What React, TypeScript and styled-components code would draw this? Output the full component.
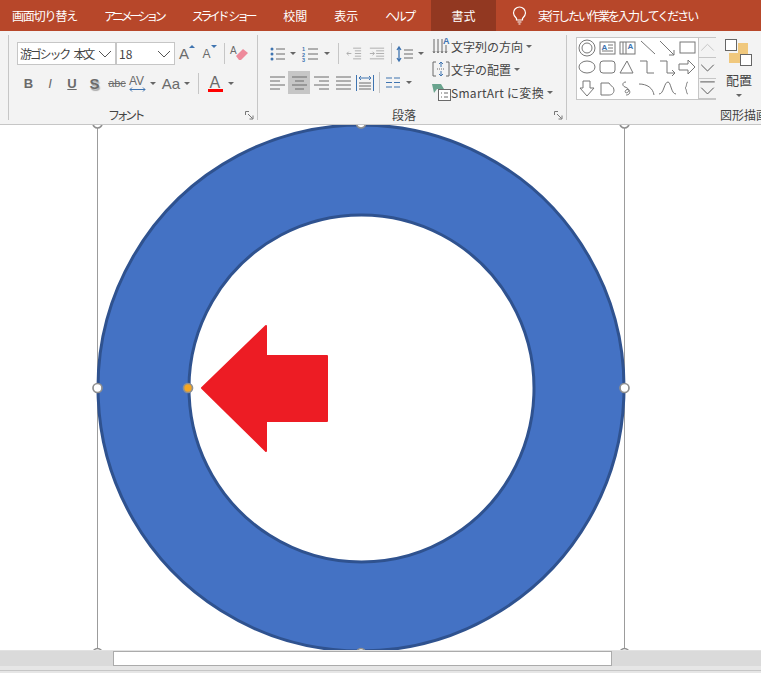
import React from "react";
import styled, { createGlobalStyle } from "styled-components";

const Global = createGlobalStyle`
  html, body { margin: 0; padding: 0; background: #e6e6e6; overflow: hidden; }
  body { font-family: "Noto Sans CJK JP", "Liberation Sans", sans-serif; }
  #root { width: 761px; height: 673px; }
`;

const GRAY = "#6a6a6a";
const BLUE = "#3f74b0";

const Page = styled.div`
  width: 761px; height: 673px; display: flex; flex-direction: column; overflow: hidden; background: #e6e6e6;
`;
const TabBar = styled.div`
  height: 31px; flex: none; display: flex; align-items: stretch; background: #b7472a; padding-left: 12px;
  color: #fff; font-size: 12px; white-space: nowrap;
`;
const Tab = styled.div<{ $track?: number; $gap?: number; $active?: boolean }>`
  display: flex; align-items: center; padding: ${(p) => (p.$active ? "0 20.5px" : "0")};
  margin-right: ${(p) => p.$gap ?? 27}px; letter-spacing: ${(p) => p.$track ?? 0}px; word-spacing: 3px;
  background: ${(p) => (p.$active ? "#923821" : "transparent")};
`;
const TellMe = styled.div`
  display: flex; align-items: center; gap: 11px; letter-spacing: -2px;
`;

const Ribbon = styled.div`
  height: 93px; flex: none; display: flex; background: #f3f3f3; border-bottom: 1px solid #c6c6c6; padding-left: 8px; overflow: hidden; box-sizing: content-box;
`;
const Group = styled.div<{ $w: number; $pad: number }>`
  position: relative; flex: none; width: ${(p) => p.$w}px; height: 85px; margin-top: 4px; display: flex; flex-direction: column;
  border-left: 1px solid #c6c6c6; box-sizing: border-box; padding-left: ${(p) => p.$pad}px;
`;
const GroupBody = styled.div<{ $gap?: number }>`
  flex: 1; display: flex; gap: ${(p) => p.$gap ?? 0}px; min-height: 0;
`;
const Stack = styled.div<{ $top?: number; $gap?: number }>`
  display: flex; flex-direction: column; padding-top: ${(p) => p.$top ?? 0}px; gap: ${(p) => p.$gap ?? 0}px;
`;
const Row = styled.div<{ $h: number }>`
  display: flex; align-items: center; height: ${(p) => p.$h}px; flex: none;
`;
const GroupLabel = styled.div<{ $indent: number; $track?: number }>`
  height: 13px; flex: none; font-size: 12px; color: #444; line-height: 16px; white-space: nowrap; padding-left: ${(p) => p.$indent}px;
  letter-spacing: ${(p) => p.$track ?? 0}px;
`;
const Launcher = styled.svg`
  position: absolute; right: 3px; bottom: 0; width: 9px; height: 9px;
`;
const Combo = styled.div<{ $w: number; $track?: number }>`
  width: ${(p) => p.$w}px; height: 23px; box-sizing: border-box; background: #fff; border: 1px solid #c6c6c6; display: flex; align-items: center;
  justify-content: space-between; padding: 0 3px 0 2px; font-size: 12px; color: #444; white-space: nowrap; letter-spacing: ${(p) => p.$track ?? 0}px;
  word-spacing: 4px; overflow: hidden; flex: none;
`;
const Slot = styled.div<{ $w: number; $on?: boolean; $h?: number }>`
  width: ${(p) => p.$w}px; height: ${(p) => p.$h ?? 23}px; flex: none; display: flex; align-items: center; justify-content: center; color: ${GRAY};
  background: ${(p) => (p.$on ? "#c6c6c6" : "transparent")}; font-family: "Liberation Sans", sans-serif; line-height: 1;
`;
const Glyph = styled.span<{ $size: number; $bold?: boolean; $italic?: boolean; $under?: boolean; $strike?: boolean; $shadow?: boolean }>`
  font-size: ${(p) => p.$size}px; font-weight: ${(p) => (p.$bold ? 700 : 400)}; font-style: ${(p) => (p.$italic ? "italic" : "normal")};
  text-decoration: ${(p) => (p.$under ? "underline" : p.$strike ? "line-through" : "none")}; color: ${GRAY};
  text-shadow: ${(p) => (p.$shadow ? "1px 2px 1px #aaa" : "none")};
`;
const Mark = styled.svg<{ $lift: number }>`
  width: 6px; height: 10px; flex: none; margin-bottom: ${(p) => p.$lift}px;
`;
const Sep = styled.div<{ $h?: number; $mx?: number }>`
  width: 1px; height: ${(p) => p.$h ?? 21}px; flex: none; background: #c6c6c6; margin: 0 ${(p) => p.$mx ?? 0}px;
`;
const Caret = styled.span<{ $mx?: number; $top?: number }>`
  width: 0; height: 0; flex: none; border-left: 3px solid transparent; border-right: 3px solid transparent; border-top: 3px solid #666;
  margin: ${(p) => p.$top ?? 0}px ${(p) => p.$mx ?? 0}px 0;
`;
const TextCommand = styled.div<{ $track?: number }>`
  height: 23px; box-sizing: border-box; padding-bottom: 1px; display: flex; align-items: center; font-size: 12px; color: #444; white-space: nowrap; letter-spacing: ${(p) => p.$track ?? 0}px;
`;
const CommandIcon = styled.svg`
  width: 19px; height: 20px; flex: none;
`;
const Gallery = styled.div`
  width: 140px; height: 63px; margin-top: 2px; box-sizing: border-box; background: #fff; border: 1px solid #c6c6c6; display: flex; flex: none;
`;
const Shapes = styled.div`
  width: 121px; display: grid; grid-template-columns: repeat(6, 20px); grid-auto-rows: 20.3px; flex: none;
`;
const ShapeCell = styled.svg`
  width: 20px; height: 20px;
`;
const GalleryScroll = styled.div`
  flex: 1; display: flex; flex-direction: column; border-left: 1px solid #c6c6c6; background: #f3f3f3;
`;
const ScrollBtn = styled.svg`
  width: 17px; height: 20.3px; display: block; border-bottom: 1px solid #c6c6c6; box-sizing: border-box;
`;
const Arrange = styled.div`
  width: 42px; margin-left: 2px; display: flex; flex-direction: column; align-items: center; font-size: 13px; color: #444; padding-top: 4px; flex: none;
`;
const ArrangeIcon = styled.svg`
  width: 28px; height: 28px; margin-bottom: 3px; flex: none;
`;
const Canvas = styled.div`
  height: 525px; flex: none; background: #fff; overflow: hidden;
`;
const Drawing = styled.svg`
  display: block; width: 761px; height: 525px;
`;
const ScrollTrack = styled.div`
  height: 16px; flex: none; background: #dadada; padding-left: 113px; border-top: 1px solid #e2e2e2; box-sizing: border-box;
`;
const ScrollThumb = styled.div`
  width: 499px; height: 15px; box-sizing: border-box; background: #fff; border: 1px solid #ababab;
`;
const Footer = styled.div`
  flex: 1; background: #e6e6e6; padding-top: 4px;
`;
const FooterLine = styled.div`
  height: 1px; background: #c6c6c6;
`;

const Chevron = () => (
  <svg width="14" height="8" viewBox="0 0 14 8"><path d="M1 1l6 6 6-6" fill="none" stroke="#555" strokeWidth="1" /></svg>
);
const L = ({ d, w = 16, h = 16, c = GRAY, sw = 1 }: { d: string; w?: number; h?: number; c?: string; sw?: number }) => (
  <svg width={w} height={h} viewBox={`0 0 ${w} ${h}`}><path d={d} fill="none" stroke={c} strokeWidth={sw} /></svg>
);
const Launch = () => (
  <Launcher viewBox="0 0 9 9"><path d="M.5 4V.5H4M3 3l4.500 4.500M8 4.500V8H4.500" fill="none" stroke="#777" /></Launcher>
);

const shapeIcons: React.ReactNode[] = [
  <><circle cx="10" cy="10" r="8" /><circle cx="10" cy="10" r="5" /></>,
  <><rect x="3" y="4" width="15" height="12" /><text x="4.500" y="12" fontSize="8" fontWeight="700" fill={BLUE} stroke="none" fontFamily="Liberation Sans">A</text><path d="M11 7h5M11 10h5M5 13h11" /></>,
  <><rect x="3" y="4" width="15" height="12" /><path d="M6 4v12M9 4v12" /><text x="10.500" y="11" fontSize="8" fontWeight="700" fill={BLUE} stroke="none" fontFamily="Liberation Sans">A</text></>,
  <path d="M4 3l14 13" />,
  <path d="M3 3l14 14M17 12v5h-5" />,
  <rect x="3" y="4" width="15" height="11" />,
  <ellipse cx="10" cy="9" rx="8" ry="6" />,
  <rect x="3" y="3" width="15" height="12" rx="3" />,
  <path d="M10 3l6 12H3z" />,
  <path d="M3 3h7v12h7" />,
  <path d="M3 3h7v12h7M15 12l3 3-3 3" />,
  <path d="M2 6h9V2l7 7-7 7v-4H2z" />,
  <path d="M6 2h7v7h4l-7 8-7-8h3z" />,
  <path d="M4 4h8c1 3 5 3 5 7 0 4-3 5-5 5H4z" />,
  <path d="M9 3c-4 0-4 4-1 5 3 1 5 3 3 5-2 2-4 0-2-2 3-2 5 2 3 4-1 1-3 1-3 1" />,
  <path d="M2 5c8 0 14 4 15 11" />,
  <path d="M2 15c5 0 5-12 9-12 3 0 3 12 8 12" />,
  <path d="M11 3c-2 0-1 5-3 6 2 1 1 6 3 6" />,
];

export default function App() {
  return (
    <Page>
      <Global />
      <TabBar>
        <Tab $track={-1.15}>画面切り替え</Tab>
        <Tab $track={-3.5} $gap={28.5}>アニメーション</Tab>
        <Tab $track={-3.4} $gap={29}>スライド ショー</Tab>
        <Tab>校閲</Tab>
        <Tab>表示</Tab>
        <Tab $track={-2.4} $gap={17}>ヘルプ</Tab>
        <Tab $active $gap={16}>書式</Tab>
        <TellMe>
          <svg width="15" height="19" viewBox="0 0 15 19">
            <path d="M4.500 12.500C3 11 1.500 9.500 1.500 7a6 6 0 0 1 12 0c0 2.500-1.500 4-3 5.500v1.500h-6zM5.500 16h4M6.500 18h2" fill="none" stroke="#fff" strokeWidth="1.200" />
          </svg>
          <span>実行したい作業を入力してください</span>
        </TellMe>
      </TabBar>

      <Ribbon>
        <Group $w={249} $pad={8}>
          <GroupBody>
            <Stack $top={7} $gap={6}>
              <Row $h={23}>
                <Combo $w={99} $track={-2.2}><span>游ゴシック 本文</span><Chevron /></Combo>
                <Combo $w={59}><span>18</span><Chevron /></Combo>
                <Slot $w={24}>
                  <Glyph $size={15}>A</Glyph>
                  <Mark $lift={10} viewBox="0 0 6 10"><path d="M0 4l3-3 3 3z" fill={BLUE} /></Mark>
                </Slot>
                <Slot $w={21}>
                  <Glyph $size={12}>A</Glyph>
                  <Mark $lift={10} viewBox="0 0 6 10"><path d="M0 1l3 3 3-3z" fill={BLUE} /></Mark>
                </Slot>
                <Sep $mx={4} />
                <Slot $w={20}>
                  <svg width="20" height="20" viewBox="0 0 20 20">
                    <text x="1" y="10" fontSize="10" fill={GRAY} fontFamily="Liberation Sans">A</text>
                    <path d="M7 12l7-7 5 4-7 7h-2z" fill="#ee8a9b" />
                  </svg>
                </Slot>
              </Row>
              <Row $h={25}>
                <Slot $w={1} />
                <Slot $w={21}><Glyph $size={13} $bold>B</Glyph></Slot>
                <Slot $w={22}><Glyph $size={13} $italic>I</Glyph></Slot>
                <Slot $w={22}><Glyph $size={13} $under $bold>U</Glyph></Slot>
                <Slot $w={23}><Glyph $size={15} $bold $shadow>S</Glyph></Slot>
                <Slot $w={22}><Glyph $size={11} $strike>abc</Glyph></Slot>
                <Slot $w={20}>
                  <svg width="20" height="20" viewBox="0 0 20 20">
                    <text x="1" y="11" fontSize="12" fill={GRAY} fontFamily="Liberation Sans">AV</text>
                    <path d="M2 15.500h15M4 13.500l-2 2 2 2M15 13.500l2 2-2 2" fill="none" stroke={BLUE} />
                  </svg>
                </Slot>
                <Caret $mx={2} />
                <Slot $w={26}><Glyph $size={15}>Aa</Glyph></Slot>
                <Caret />
                <Sep $mx={8} />
                <Slot $w={18}>
                  <svg width="18" height="20" viewBox="0 0 18 20">
                    <text x="2.500" y="13.500" fontSize="16" fill={GRAY} fontFamily="Liberation Sans">A</text>
                    <rect x="1" y="15" width="15" height="3" fill="#f00" />
                  </svg>
                </Slot>
                <Caret $mx={3} />
              </Row>
            </Stack>
          </GroupBody>
          <GroupLabel $indent={91} $track={-3.5}>フォント</GroupLabel>
          <Launch />
        </Group>

        <Group $w={309} $pad={9}>
          <GroupBody $gap={8}>
            <Stack $top={7} $gap={6}>
              <Row $h={23}>
                <Slot $w={22}>
                  <svg width="16" height="16" viewBox="0 0 16 16">
                    <path d="M6 3h9M6 8h9M6 13h9" stroke={GRAY} fill="none" />
                    <circle cx="2" cy="3" r="1.500" fill={BLUE} />
                    <circle cx="2" cy="8" r="1.500" fill={BLUE} />
                    <circle cx="2" cy="13" r="1.500" fill={BLUE} />
                  </svg>
                </Slot>
                <Caret $mx={1} />
                <Slot $w={26}>
                  <svg width="18" height="16" viewBox="0 0 18 16">
                    <path d="M7 3h10M7 8h10M7 13h10" stroke={GRAY} fill="none" />
                    <text x="1" y="5" fontSize="5.500" fontWeight="700" fill={BLUE} fontFamily="Liberation Sans">1</text>
                    <text x="1" y="10.500" fontSize="5.500" fontWeight="700" fill={BLUE} fontFamily="Liberation Sans">2</text>
                    <text x="1" y="16" fontSize="5.500" fontWeight="700" fill={BLUE} fontFamily="Liberation Sans">3</text>
                  </svg>
                </Slot>
                <Caret $mx={1} />
                <Slot $w={7} />
                <Sep />
                <Slot $w={4} />
                <Slot $w={22}>
                  <svg width="16" height="13" viewBox="0 0 18 14"><path d="M8 1h9M10 4h7M10 7h7M10 10h7M8 13h9M6 7H1M3 5L1 7l2 2" fill="none" stroke="#a8a8a8" /></svg>
                </Slot>
                <Slot $w={23}>
                  <svg width="16" height="13" viewBox="0 0 18 14"><path d="M1 1h16M8 4h9M8 7h9M8 10h9M1 13h16M1 7h5M4 5l2 2-2 2" fill="none" stroke="#a8a8a8" /></svg>
                </Slot>
                <Slot $w={3} />
                <Sep />
                <Slot $w={26}>
                  <svg width="18" height="18" viewBox="0 0 18 18"><path d="M3 2v14M1 5l2-3 2 3M1 13l2 3 2-3" fill="none" stroke={BLUE} strokeWidth="1.300" /><path d="M8 5h9M8 9h9M8 13h9" stroke={GRAY} /></svg>
                </Slot>
                <Caret />
              </Row>
              <Row $h={23}>
                <Slot $w={21}><L d="M1 3h15M1 7h10M1 11h15M1 15h10" w={17} h={17} /></Slot>
                <Slot $w={22} $on><L d="M1 3h15M4 7h9M1 11h15M4 15h9" w={17} h={17} /></Slot>
                <Slot $w={22}><L d="M1 3h15M6 7h10M1 11h15M6 15h10" w={17} h={17} /></Slot>
                <Slot $w={22}><L d="M1 3h15M1 7h15M1 11h15M1 15h15" w={17} h={17} /></Slot>
                <Slot $w={22}>
                  <svg width="18" height="18" viewBox="0 0 18 18"><path d="M.5 1v16M17.500 1v16" stroke={BLUE} /><path d="M3 4h12M5 2L3 4l2 2M13 2l2 2-2 2" fill="none" stroke={BLUE} /><path d="M3 9h12M3 12h12M3 15h12" stroke={GRAY} /></svg>
                </Slot>
                <Slot $w={3} />
                <Sep />
                <Slot $w={26}>
                  <svg width="14" height="14" viewBox="0 0 14 14"><path d="M0 2h6M8 2h6M0 6.500h6M8 6.500h6M0 11h6M8 11h6" fill="none" stroke={BLUE} strokeWidth="1.200" /></svg>
                </Slot>
                <Caret />
              </Row>
            </Stack>
            <Stack $top={0}>
              <TextCommand>
                <CommandIcon viewBox="0 0 19 20"><path d="M2 3v12M6 3v12M10 3v12M14 9v6M1 15l1 2 1-2M5 15l1 2 1-2M9 15l1 2 1-2M13 15l1 2 1-2" fill="none" stroke={GRAY} /><text x="11" y="8" fontSize="9" fontWeight="700" fill={BLUE} fontFamily="Liberation Sans">A</text></CommandIcon>
                文字列の方向<Caret $mx={3} />
              </TextCommand>
              <TextCommand>
                <CommandIcon viewBox="0 0 19 20"><path d="M4 3H1v14h3M14 3h3v14h-3" fill="none" stroke={GRAY} /><path d="M9 3v5M7 5l2-2 2 2M9 12v5M7 15l2 2 2-2" fill="none" stroke={BLUE} /><path d="M5 10h8" stroke={GRAY} strokeDasharray="1 1" /></CommandIcon>
                文字の配置<Caret $mx={3} />
              </TextCommand>
              <TextCommand $track={0.3}>
                <CommandIcon viewBox="0 0 19 20"><path d="M0 2h9l3 5H5l-3 4z" fill="#6aa48e" /><rect x="6.500" y="7.500" width="12" height="11" fill="#fff" stroke={GRAY} /><path d="M9 11h1M12 11h4M9 15h1M12 15h4" stroke={GRAY} /></CommandIcon>
                SmartArt に変換<Caret $mx={3} />
              </TextCommand>
            </Stack>
          </GroupBody>
          <GroupLabel $indent={125}>段落</GroupLabel>
          <Launch />
        </Group>

        <Group $w={200} $pad={9}>
          <GroupBody>
            <Gallery>
              <Shapes>
                {shapeIcons.map((s, i) => (
                  <ShapeCell key={i} viewBox="0 0 20 20" fill="none" stroke="#777">{s}</ShapeCell>
                ))}
              </Shapes>
              <GalleryScroll>
                <ScrollBtn viewBox="0 0 17 20"><path d="M2 13l6.500-6.500L15 13" fill="none" stroke="#c4c4c4" /></ScrollBtn>
                <ScrollBtn viewBox="0 0 17 20"><path d="M2 7l6.500 6.500L15 7" fill="none" stroke="#555" /></ScrollBtn>
                <ScrollBtn viewBox="0 0 17 20"><path d="M1 3h15M2 9l6.500 6.500L15 9" fill="none" stroke="#555" /></ScrollBtn>
              </GalleryScroll>
            </Gallery>
            <Arrange>
              <ArrangeIcon viewBox="0 0 28 28">
                <rect x="13" y="4" width="10" height="14" fill="#f0c87d" />
                <rect x="4" y="14" width="13" height="10" fill="#f0c87d" />
                <rect x=".5" y=".5" width="11" height="11" fill="#fff" stroke="#666" />
                <rect x="15.500" y="15.500" width="11" height="11" fill="#fff" stroke="#666" />
              </ArrangeIcon>
              <span>配置</span>
              <Caret $top={5} />
            </Arrange>
          </GroupBody>
          <GroupLabel $indent={144}>図形描画</GroupLabel>
        </Group>
      </Ribbon>

      <Canvas>
        <Drawing viewBox="0 125 761 525">
          <path d="M97.500 125V650M624.500 125V650" stroke="#9c9c9c" fill="none" />
          <path
            fillRule="evenodd"
            d="M361 125a263 263 0 1 0 .01 0zM361.500 215a172.500 173.500 0 1 1-.01 0z"
            fill="#4472c4" stroke="#2f528f" strokeWidth="3"
          />
          <path d="M202 388L266 326V356H327V421H266V451z" fill="#ed1c24" stroke="#ed1c24" strokeWidth="2" strokeLinejoin="round" />
          {[[97.5, 123.5], [361, 123.5], [624.5, 123.5], [97.5, 388], [624.5, 388], [97.5, 653], [361, 653], [624.5, 653]].map(([x, y]) => (
            <circle key={`${x}-${y}`} cx={x} cy={y} r="4.500" fill="#fff" stroke="#8f8f8f" strokeWidth="1.700" />
          ))}
          <circle cx="188" cy="388" r="4.500" fill="#f5a623" stroke="#8f8f8f" strokeWidth="1.700" />
        </Drawing>
      </Canvas>
      <ScrollTrack><ScrollThumb /></ScrollTrack>
      <Footer><FooterLine /></Footer>
    </Page>
  );
}
